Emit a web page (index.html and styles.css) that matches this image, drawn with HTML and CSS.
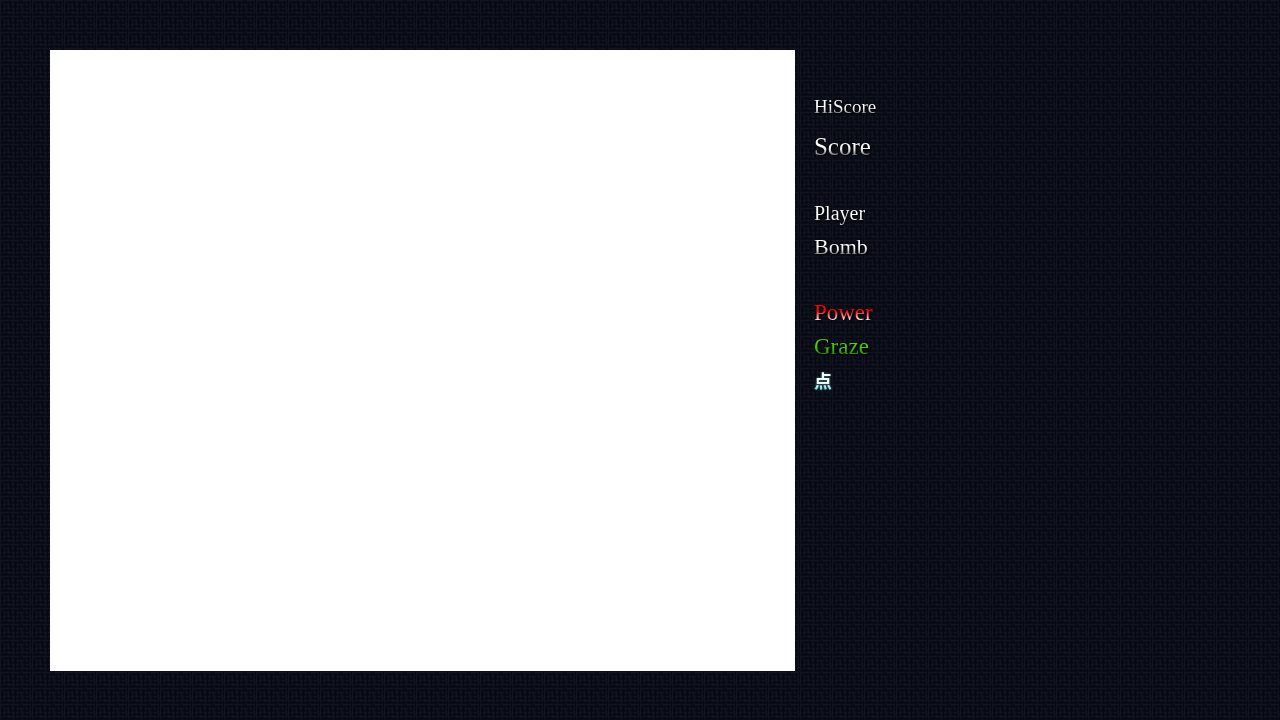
FILE: index.html
```html
<!DOCTYPE html>
<html lang="en">
<head>
<meta charset="utf-8">
<meta name="viewport" content="width=device-width, initial-scale=1">
<title>Stage</title>
<link rel="stylesheet" href="styles.css">
</head>
<body>
<main class="game">
  <section class="playfield" aria-label="Playfield"></section>
  <aside class="status">
    <div class="group scores">
      <div class="label hiscore">HiScore</div>
      <div class="label score">Score</div>
    </div>
    <div class="group">
      <div class="label player">Player</div>
      <div class="label bomb">Bomb</div>
    </div>
    <div class="group">
      <div class="label power">Power</div>
      <div class="label graze">Graze</div>
      <div class="label point" lang="ja">点</div>
    </div>
  </aside>
</main>
</body>
</html>
```

FILE: styles.css
```css
* { box-sizing: border-box; }

body {
  margin: 0;
  min-height: 100vh;
  background-color: #0a0c17;
  /* woven cloth: short crossing threads, light and dark */
  background-image: url("data:image/svg+xml,%3Csvg xmlns='http://www.w3.org/2000/svg' width='32' height='16' fill='none'%3E%3Cpath stroke='%2312141f' d='M0 .5h19M22 .5h10M3 4.5h13M18 4.5h9M0 8.5h10M12 8.5h17M4 12.5h9M16 12.5h14M.5 1v14M4.5 2v9M8.5 5v10M12.5 0v7M13.5 9v6M17.5 1v13M21.5 4v5M22.5 10v6M26.5 0v7M27.5 9v5M30.5 2v11'/%3E%3Cpath stroke='%23070912' d='M2 2.5h8M14 2.5h9M25 2.5h5M1 6.5h5M9 6.5h11M23 6.5h6M5 10.5h7M15 10.5h6M24 10.5h5M1 14.5h9M14 14.5h12M2.5 3v8M6.5 8v6M10.5 1v7M15.5 4v9M19.5 7v8M24.5 3v6M28.5 9v6M31.5 0v8'/%3E%3C/svg%3E");
  font-family: "Liberation Serif", "Noto Sans CJK JP", serif;
}

.game {
  display: flex;
  align-items: flex-start;
  gap: 19px;
  padding: 50px;
}

.playfield {
  flex: none;
  width: 58.2vw;
  aspect-ratio: 6 / 5;
  background: #fff;
}

.status {
  display: flex;
  flex: 1;
  flex-direction: column;
  align-items: flex-start;
  gap: 32px;
  padding-top: 40px;
}

.group {
  display: flex;
  flex-direction: column;
  align-items: flex-start;
}

.scores { gap: 6px; }

.label {
  line-height: 34px;
  color: transparent;
  background: linear-gradient(#fff 16px, #eee 19px, #777 25px);
  -webkit-background-clip: text;
  background-clip: text;
  filter: drop-shadow(1px 1px 1px #000);
}

.hiscore { font-size: 19px; }
.score { font-size: 25px; }
.player {
  font-size: 20px;
  background-image: linear-gradient(#fff 20px, #ccc 28px);
}
.bomb { font-size: 22px; }
.power {
  font-size: 23px;
  background-image: linear-gradient(#f00 15px, #f33 17px, #fff 25px);
}
.graze {
  font-size: 23px;
  background-image: linear-gradient(#4fd400 13px, #4ac400 18px, #1c6500 28px);
}
.point {
  font-family: "Noto Sans CJK JP", sans-serif;
  font-size: 18px;
  font-weight: 700;
  line-height: 32px;
  background-image: linear-gradient(#fff 18px, #9adbe0 25px);
  filter: drop-shadow(0 0 1px #2c8590);
}
```
